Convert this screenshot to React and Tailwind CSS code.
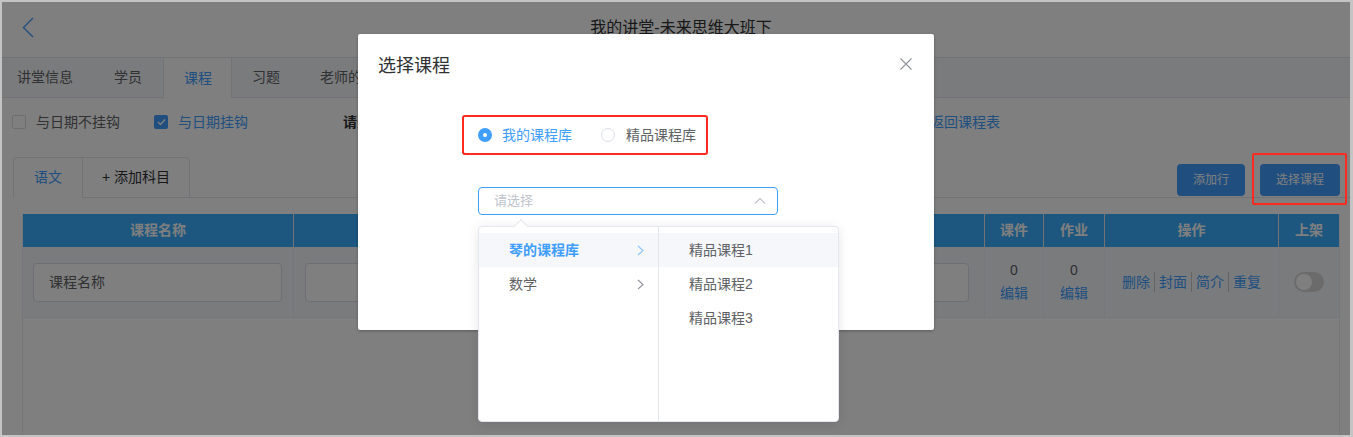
import React from 'react';

function ChevronRight({ color }) {
  return (
    <svg width="7" height="11" viewBox="0 0 7 11">
      <path d="M1 1 L6 5.5 L1 10" fill="none" stroke={color} strokeWidth="1.1" />
    </svg>
  );
}

const LEFT = [
  { name: '琴的课程库', active: true },
  { name: '数学', active: false },
];
const RIGHT = ['精品课程1', '精品课程2', '精品课程3'];

export default function App() {
  return (
    <div className="relative w-[1353px] h-[437px] overflow-hidden border-t-2 border-l-2 border-r-[3px] border-b-2 border-[#c4c4c4] bg-white font-['Liberation_Sans','Noto_Sans_CJK_SC',sans-serif] text-[14px] text-[#606266]">
      {/* page under the dialog */}
      <div className="flex h-full flex-col">
        <header className="flex h-[56px] items-center border-b border-[#e4e7ed] pb-[4px]">
          <svg className="ml-[20px]" width="12" height="21" viewBox="0 0 12 21">
            <path d="M11 1 L1.5 10.5 L11 20" fill="none" stroke="#409eff" strokeWidth="1.4" />
          </svg>
          <h1 className="flex-1 pr-[22px] text-center text-[16px] text-[#303133]">我的讲堂-未来思维大班下</h1>
        </header>

        <nav className="flex h-[40px] border-b border-[#e4e7ed] bg-[#f5f7fa]">
          <div className="flex h-[39px] items-center pl-[15px] pr-[20px]">讲堂信息</div>
          <div className="flex h-[39px] items-center px-[21px]">学员</div>
          <div className="-mb-px flex h-[40px] items-center border-x border-[#e4e7ed] bg-white pl-[20px] pr-[19px] text-[#409eff]">课程</div>
          <div className="flex h-[39px] items-center px-[20px]">习题</div>
          <div className="flex h-[39px] items-center px-[20px]">老师的点评</div>
        </nav>

        <div className="flex h-[48px] items-center pl-[10px]">
          <span className="h-[14px] w-[14px] rounded-[2px] border border-[#dcdfe6] bg-white" />
          <span className="ml-[10px] text-[#606266]">与日期不挂钩</span>
          <span className="ml-[34px] flex h-[14px] w-[14px] items-center justify-center rounded-[2px] bg-[#409eff]">
            <svg width="9" height="8" viewBox="0 0 9 8">
              <path d="M1 4 L3.5 6.5 L8 1.5" fill="none" stroke="#fff" strokeWidth="1.3" />
            </svg>
          </span>
          <span className="ml-[10px] text-[#409eff]">与日期挂钩</span>
          <span className="ml-[95px] w-[587px] font-bold text-[#303133]">请选择开课日期：</span>
          <span className="text-[#409eff]">返回课程表</span>
        </div>

        <div className="ml-[11px] mt-[11px] flex items-end justify-between border-b border-[#e4e7ed] pr-[10px]">
          <div className="-mb-px flex rounded-t-[4px] border border-b-0 border-[#e4e7ed]">
            <div className="flex h-[40px] w-[68px] items-center justify-center border-b border-white text-[#409eff]">语文</div>
            <div className="flex h-[40px] w-[107px] items-center justify-center border-b border-l border-[#e4e7ed] text-[#303133]">+ 添加科目</div>
          </div>
          <div className="mb-[1px] flex gap-[15px]">
            <button className="h-[32px] rounded-[4px] bg-[#409eff] px-[16px] text-[12px] text-white">添加行</button>
            <button className="h-[32px] rounded-[4px] bg-[#409eff] px-[16px] text-[12px] text-white">选择课程</button>
          </div>
        </div>

        <div className="ml-[20px] mt-[16px] flex w-[1318px] flex-1 flex-col border-x border-[#ebeef5]">
          <div className="flex h-[33px] bg-[#3aaeff] font-bold text-white">
            <div className="flex w-[271px] items-center justify-center border-r border-[#e6e6e6]">课程名称</div>
            <div className="flex w-[346px] items-center justify-center">课程简介</div>
            <div className="flex w-[345px] items-center justify-center border-r border-[#e6e6e6]">上课时间</div>
            <div className="flex w-[59px] items-center justify-center border-r border-[#e6e6e6]">课件</div>
            <div className="flex w-[61px] items-center justify-center border-r border-[#e6e6e6]">作业</div>
            <div className="flex w-[174px] items-center justify-center border-r border-[#e6e6e6]">操作</div>
            <div className="flex w-[60px] items-center justify-center">上架</div>
          </div>
          <div className="flex h-[71px] border-b border-[#ebeef5] bg-[#f4f6fb]">
            <div className="flex w-[271px] items-center border-r border-[#ebeef5] pl-[10px]">
              <div className="flex h-[39px] w-[249px] items-center rounded-[4px] border border-[#dcdfe6] bg-white pl-[15px] text-[#606266]">课程名称</div>
            </div>
            <div className="flex w-[346px] items-center border-r border-[#ebeef5] px-[11px]">
              <div className="h-[39px] w-full rounded-[4px] border border-[#dcdfe6] bg-white" />
            </div>
            <div className="flex w-[345px] items-center border-r border-[#ebeef5] px-[15px]">
              <div className="h-[39px] w-full rounded-[4px] border border-[#dcdfe6] bg-white" />
            </div>
            <div className="flex w-[59px] flex-col items-center justify-center border-r border-[#ebeef5] leading-[23px]">
              <span>0</span>
              <span className="text-[#409eff]">编辑</span>
            </div>
            <div className="flex w-[61px] flex-col items-center justify-center border-r border-[#ebeef5] leading-[23px]">
              <span>0</span>
              <span className="text-[#409eff]">编辑</span>
            </div>
            <div className="flex w-[174px] items-center justify-center border-r border-[#ebeef5] text-[#409eff]">
              <span>删除</span>
              <span className="mx-[4px] h-[20px] w-px bg-[#c8c8c8]" />
              <span>封面</span>
              <span className="mx-[4px] h-[20px] w-px bg-[#c8c8c8]" />
              <span>简介</span>
              <span className="mx-[4px] h-[20px] w-px bg-[#c8c8c8]" />
              <span>重复</span>
            </div>
            <div className="flex w-[60px] items-center justify-center">
              <span className="flex h-[20px] w-[30px] items-center rounded-full bg-[#d6d6d6] pl-[2px]">
                <span className="h-[16px] w-[16px] rounded-full bg-white" />
              </span>
            </div>
          </div>
        </div>
      </div>

      {/* dim overlay */}
      <div className="absolute inset-0 bg-black/50" />

      {/* annotation round the button */}
      <div className="absolute left-[1250px] top-[151px] h-[52px] w-[95px] rounded-[2px] border-[2.5px] border-[#ff2a1f]" />

      {/* dialog */}
      <div className="absolute left-[356px] top-[32px] h-[296px] w-[576px] rounded-[2px] bg-white shadow-[0_1px_3px_rgba(0,0,0,0.3)]">
        <div className="flex h-[54px] items-start justify-between pl-[20px] pr-[22px] pt-[20px]">
          <h2 className="text-[18px] leading-[24px] text-[#303133]">选择课程</h2>
          <svg className="mt-[4px]" width="12" height="12" viewBox="0 0 12 12">
            <path d="M0.5 0.5 L11.5 11.5 M11.5 0.5 L0.5 11.5" fill="none" stroke="#909399" strokeWidth="1.1" />
          </svg>
        </div>

        <div className="ml-[104px] mt-[27px] flex h-[40px] w-[246px] items-center rounded-[3px] border-[2.5px] border-[#ff2a1f] pl-[14px]">
          <span className="flex h-[14px] w-[14px] items-center justify-center rounded-full bg-[#409eff]">
            <span className="h-[4px] w-[4px] rounded-full bg-white" />
          </span>
          <span className="ml-[10px] text-[#409eff]">我的课程库</span>
          <span className="ml-[29px] h-[14px] w-[14px] rounded-full border border-[#dcdfe6] bg-white" />
          <span className="ml-[11px] text-[#606266]">精品课程库</span>
        </div>

        <div className="relative ml-[120px] mt-[32px] w-[300px]">
          <div className="flex h-[28px] items-center justify-between rounded-[4px] border border-[#409eff] pl-[15px] pr-[11px] text-[13px] text-[#c0c4cc]">
            <span>请选择</span>
            <svg width="12" height="12" viewBox="0 0 12 12">
              <path d="M1 8.5 L6 3.5 L11 8.5" fill="none" stroke="#c0c4cc" strokeWidth="1.2" />
            </svg>
          </div>

          <div className="absolute left-0 top-[39px] flex h-[196px] w-[361px] rounded-[4px] border border-[#e4e7ed] bg-white shadow-[0_2px_12px_rgba(0,0,0,0.1)]">
            <span className="absolute left-[37px] top-[-6px] h-[10px] w-[10px] rotate-45 border-l border-t border-[#e4e7ed] bg-white" />
            <ul className="relative w-[180px] border-r border-[#e4e7ed] pt-[6px]">
              {LEFT.map(item => (
                <li
                  key={item.name}
                  className={
                    item.active
                      ? 'flex h-[34px] items-center justify-between bg-[#f5f7fa] pl-[30px] pr-[14px] font-bold text-[#409eff]'
                      : 'flex h-[34px] items-center justify-between pl-[30px] pr-[14px] text-[#606266]'
                  }
                >
                  <span>{item.name}</span>
                  <ChevronRight color={item.active ? '#8cc4ff' : '#909399'} />
                </li>
              ))}
            </ul>
            <ul className="relative flex-1 pt-[6px]">
              {RIGHT.map((name, i) => (
                <li
                  key={name}
                  className={
                    i === 0
                      ? 'flex h-[34px] items-center bg-[#f5f7fa] pl-[30px] text-[#606266]'
                      : 'flex h-[34px] items-center pl-[30px] text-[#606266]'
                  }
                >
                  {name}
                </li>
              ))}
            </ul>
          </div>
        </div>
      </div>
    </div>
  );
}
